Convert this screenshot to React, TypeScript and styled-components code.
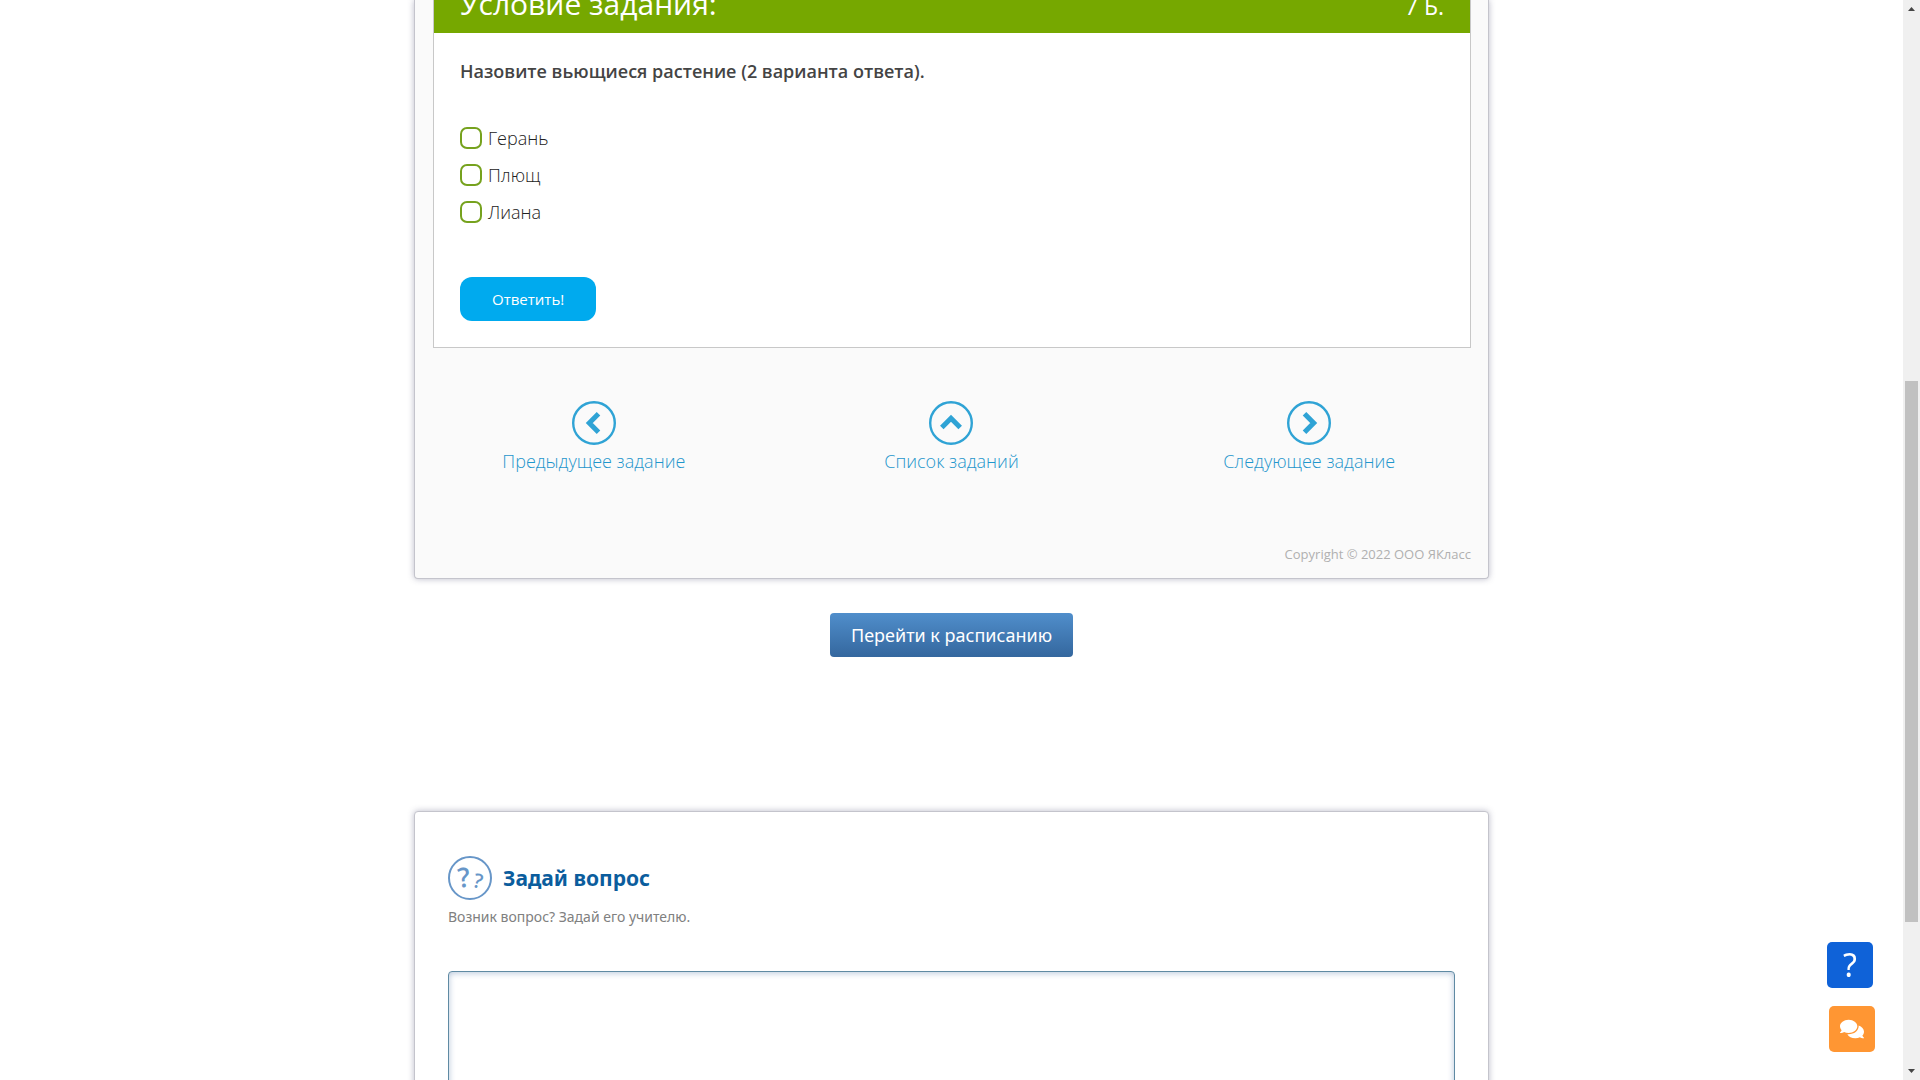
import React from "react";
import styled, { createGlobalStyle } from "styled-components";
import { FaComments } from "react-icons/fa";

const openSans = `"Open Sans", "Noto Sans", sans-serif`;
const notoSans = `"Noto Sans", "Open Sans", sans-serif`;

const GlobalStyle = createGlobalStyle`
  *, *::before, *::after { box-sizing: border-box; }
  body { margin: 0; background: #fff; font-family: ${openSans}; color: #444; }
  button, textarea { font-family: inherit; }
`;

const Screen = styled.div`
  display: flex;
  height: 100vh;
  overflow: hidden;
`;

const Page = styled.main`
  flex: 1;
  min-width: 0;
  display: flex;
  flex-direction: column;
  align-items: center;
  overflow: hidden;
`;

const Card = styled.section`
  flex: none;
  width: 100%;
  max-width: 1075px;
  border: 1px solid #c4c4cc;
  border-radius: 4px;
  box-shadow: 0 0 6px rgba(60, 60, 100, 0.35);
`;

const TaskCard = styled(Card)`
  border-top: 0;
  border-radius: 0 0 4px 4px;
  background: #fafafa;
`;

const Task = styled.article`
  margin: 0 17px 0 18px;
  border: 1px solid #c8c8c8;
  border-top: 0;
  background: #fff;
`;

const TaskHeader = styled.header`
  display: flex;
  justify-content: space-between;
  align-items: flex-end;
  height: 33px;
  padding: 0 26px 9px;
  background: #76a800;
  color: #fff;
`;

const TaskTitle = styled.h1`
  margin: 0;
  font-size: 30px;
  font-weight: 400;
  line-height: 40px;
`;

const Points = styled.span`
  font-size: 23px;
  line-height: 36px;
`;

const TaskForm = styled.form`
  padding: 25px 26px 26px;
`;

const Question = styled.p`
  margin: 0;
  font-size: 18px;
  font-weight: 600;
  line-height: 26px;
`;

const Options = styled.fieldset`
  display: flex;
  flex-direction: column;
  gap: 11px;
  margin: 41px 0 52px;
  padding: 0;
  border: 0;
`;

const Option = styled.label`
  display: flex;
  align-items: center;
  gap: 6px;
  height: 26px;
  color: #222;
  font-size: 18px;
  font-weight: 300;
`;

const Checkbox = styled.input`
  appearance: none;
  width: 22px;
  height: 22px;
  margin: 0;
  border: 2px solid #76a21e;
  border-radius: 7px;
  background: #fff;
  &:checked { background: #76a21e; box-shadow: inset 0 0 0 3px #fff; }
`;

const AnswerButton = styled.button`
  display: block;
  height: 44px;
  padding: 0 32px;
  border: 0;
  border-radius: 12px;
  background: #00aaee;
  color: #fff;
  font-size: 15px;
  cursor: pointer;
`;

const TaskNav = styled.nav`
  display: grid;
  grid-template-columns: repeat(3, 1fr);
  margin-top: 53px;
`;

const NavLink = styled.a`
  display: flex;
  flex-direction: column;
  align-items: center;
  gap: 3px;
  color: #1f96cc;
  font-size: 18px;
  font-weight: 300;
  line-height: 26px;
  text-decoration: none;
`;

const Copyright = styled.footer`
  margin: 70px 17px 0;
  padding-bottom: 14px;
  color: #b0b0b0;
  font-size: 13px;
  font-weight: 400;
  line-height: 20px;
  text-align: right;
`;

const ScheduleButton = styled.button`
  flex: none;
  height: 44px;
  margin: 34px 0 154px;
  padding: 0 21px;
  border: 0;
  border-radius: 4px;
  background: linear-gradient(#508ecb, #34679e);
  color: #fff;
  font-family: ${notoSans};
  font-size: 18px;
  cursor: pointer;
`;

const AskCard = styled(Card)`
  padding: 44px 33px;
  background: #fff;
  font-family: ${notoSans};
`;

const AskHeading = styled.div`
  display: flex;
  align-items: center;
  gap: 11px;
`;

const AskTitle = styled.h2`
  margin: 0;
  color: #0b5d9d;
  font-size: 21px;
  font-weight: 700;
  line-height: 30px;
`;

const AskHint = styled.label`
  display: block;
  margin: 6px 0 44px;
  color: #808080;
  font-size: 14px;
  line-height: 21px;
`;

const AskText = styled.textarea`
  display: block;
  width: 100%;
  height: 200px;
  padding: 12px;
  border: 1px solid #5f8aa3;
  border-radius: 4px;
  outline: 0;
  resize: none;
  box-shadow: inset 0 1px 6px rgba(70, 110, 160, 0.4);
  font-size: 16px;
`;

const FloatingButtons = styled.div`
  position: fixed;
  right: 45px;
  bottom: 28px;
  display: flex;
  flex-direction: column;
  align-items: flex-end;
  gap: 18px;
`;

const FloatingButton = styled.button<{ $color: string; $inset?: boolean }>`
  display: flex;
  align-items: center;
  justify-content: center;
  width: 46px;
  height: 46px;
  margin-right: ${(p) => (p.$inset ? "2px" : "0")};
  padding: 0;
  border: 0;
  border-radius: 5px;
  background: ${(p) => p.$color};
  color: #fff;
  font-family: ${notoSans};
  font-size: 32px;
  line-height: 46px;
  cursor: pointer;
`;

const ScrollBar = styled.aside`
  flex: none;
  display: flex;
  flex-direction: column;
  align-items: center;
  width: 17px;
  background: #f0f0f0;
`;

const ScrollArrow = styled.svg`
  flex: none;
  width: 17px;
  height: 17px;
  fill: #454545;
`;

const ScrollSpace = styled.div<{ $share: number }>`
  flex: ${(p) => p.$share} 0 0;
`;

const ScrollThumb = styled(ScrollSpace)`
  width: 13px;
  background: #c1c1c1;
`;

const options = ["Герань", "Плющ", "Лиана"];

const links = [
  { label: "Предыдущее задание", angle: 0 },
  { label: "Список заданий", angle: 90 },
  { label: "Следующее задание", angle: 180 },
];

function CircleArrow({ angle }: { angle: number }) {
  return (
    <svg width="44" height="44" viewBox="0 0 44 44" fill="none" stroke="#2fa3d5" aria-hidden="true">
      <circle cx="22" cy="22" r="20.8" strokeWidth="2.4" />
      <path d="M26.5 12.8 L17.3 22 L26.5 31.2" strokeWidth="5" transform={`rotate(${angle} 22 22)`} />
    </svg>
  );
}

function QuestionsIcon() {
  return (
    <svg width="44" height="44" viewBox="0 0 44 44" aria-hidden="true">
      <circle cx="22" cy="22" r="21" fill="none" stroke="#6796c8" strokeWidth="2" />
      <g fill="#6796c8" fontFamily="Open Sans" fontWeight="600" textAnchor="middle">
        <text x="16" y="31" fontSize="27" transform="rotate(-7 16 22)">?</text>
        <text x="30" y="32" fontSize="20" transform="rotate(14 30 25)">?</text>
      </g>
    </svg>
  );
}

export default function App() {
  return (
    <Screen>
      <GlobalStyle />
      <Page>
        <TaskCard>
          <Task>
            <TaskHeader>
              <TaskTitle>Условие задания:</TaskTitle>
              <Points>7 Б.</Points>
            </TaskHeader>
            <TaskForm onSubmit={(e) => e.preventDefault()}>
              <Question id="question">Назовите вьющиеся растение (2 варианта ответа).</Question>
              <Options aria-labelledby="question">
                {options.map((name) => (
                  <Option key={name}>
                    <Checkbox type="checkbox" name="answer" value={name} />
                    {name}
                  </Option>
                ))}
              </Options>
              <AnswerButton type="submit">Ответить!</AnswerButton>
            </TaskForm>
          </Task>
          <TaskNav>
            {links.map((link) => (
              <NavLink key={link.label} href="#">
                <CircleArrow angle={link.angle} />
                {link.label}
              </NavLink>
            ))}
          </TaskNav>
          <Copyright>Copyright © 2022 ООО ЯКласс</Copyright>
        </TaskCard>

        <ScheduleButton type="button">Перейти к расписанию</ScheduleButton>

        <AskCard>
          <AskHeading>
            <QuestionsIcon />
            <AskTitle>Задай вопрос</AskTitle>
          </AskHeading>
          <AskHint htmlFor="ask">Возник вопрос? Задай его учителю.</AskHint>
          <AskText id="ask" />
        </AskCard>
      </Page>

      <ScrollBar aria-hidden="true">
        <ScrollArrow viewBox="0 0 17 17"><path d="M5 11 L8.5 7 L12 11 Z" /></ScrollArrow>
        <ScrollSpace $share={364} />
        <ScrollThumb $share={541} />
        <ScrollSpace $share={141} />
        <ScrollArrow viewBox="0 0 17 17"><path d="M5 6 L8.5 10 L12 6 Z" /></ScrollArrow>
      </ScrollBar>

      <FloatingButtons>
        <FloatingButton type="button" $color="#0f62d8" $inset>?</FloatingButton>
        <FloatingButton type="button" $color="#ff9633" aria-label="Чат">
          <FaComments size={24} />
        </FloatingButton>
      </FloatingButtons>
    </Screen>
  );
}
